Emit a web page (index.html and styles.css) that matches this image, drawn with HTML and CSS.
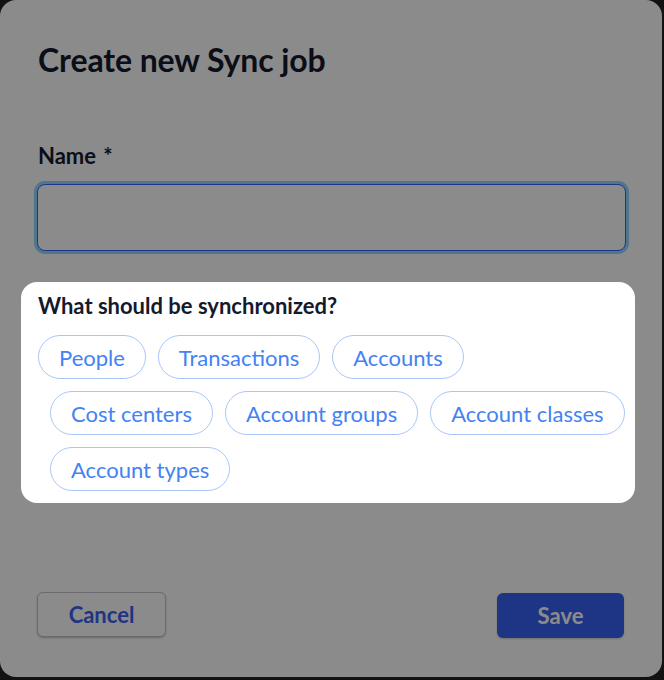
FILE: index.html
```html
<!DOCTYPE html>
<html lang="en">
<head>
<meta charset="utf-8">
<title>Create new Sync job</title>
<link rel="stylesheet" href="styles.css">
</head>
<body>
<div class="modal">
  <h1 class="title">Create new Sync job</h1>
  <label class="label" for="name">Name <span class="req">*</span></label>
  <input class="input" id="name" type="text">
  <section class="spotlight">
    <h2 class="question">What should be synchronized?</h2>
    <div class="chips">
      <span class="chip">People</span>
      <span class="chip">Transactions</span>
      <span class="chip">Accounts</span>
      <span class="chip">Cost centers</span>
      <span class="chip">Account groups</span>
      <span class="chip">Account classes</span>
      <span class="chip">Account types</span>
    </div>
  </section>
  <div class="actions">
    <button class="btn btn-cancel" type="button">Cancel</button>
    <button class="btn btn-save" type="button">Save</button>
  </div>
</div>
<div class="backdrop"></div>
</body>
</html>
```

FILE: styles.css
```css
* { box-sizing: border-box; }

html, body {
  margin: 0;
  padding: 0;
}

body {
  background: #222222;
  font-family: Lato, "Open Sans", Arial, sans-serif;
  color: #141a2e;
  width: 664px;
  height: 680px;
  overflow: hidden;
}

.modal {
  width: 662px;
  height: 677px;
  background: #ffffff;
  border-radius: 16px;
  padding: 40px 36px 0 37px;
  display: flex;
  flex-direction: column;
}

.title {
  margin: 0 0 0 1px;
  font-size: 32px;
  line-height: 40px;
  font-weight: 700;
  letter-spacing: -0.1px;
}

.label {
  margin: 63px 0 0 1px;
  font-size: 22px;
  line-height: 26px;
  font-weight: 700;
}

.req {
  font-weight: 700;
  margin-left: 2px;
}

.input {
  margin-top: 15px;
  width: 589px;
  height: 67px;
  flex-shrink: 0;
  border: 1px solid #3761f4;
  border-radius: 8px;
  background: #ffffff;
  box-shadow: 0 0 0 3px #93d8ff;
  outline: none;
}

.spotlight {
  position: relative;
  z-index: 2;
  margin: 31px 0 0 -16px;
  width: 614px;
  background: #ffffff;
  border-radius: 16px;
  padding: 11px 9px 12px 17px;
}

.question {
  margin: 0;
  font-size: 22px;
  line-height: 26px;
  font-weight: 700;
}

.chips {
  margin-top: 16px;
  display: flex;
  flex-wrap: wrap;
  row-gap: 12px;
}

.chip + .chip {
  margin-left: 12px;
}

.chip {
  display: inline-flex;
  align-items: center;
  height: 44px;
  padding: 0 20px;
  border: 1px solid #a9c6fb;
  border-radius: 22px;
  color: #4382f4;
  font-size: 22px;
  font-weight: 400;
  white-space: nowrap;
}

.actions {
  margin-top: auto;
  margin-bottom: 39px;
  display: flex;
  justify-content: space-between;
  align-items: center;
}

.btn {
  height: 45px;
  width: 129px;
  border-radius: 6px;
  font-family: Lato, "Open Sans", Arial, sans-serif;
  font-size: 22px;
  font-weight: 700;
  cursor: pointer;
}

.btn-cancel {
  background: #ffffff;
  color: #3a62f0;
  border: 1px solid #c4c4cc;
  box-shadow: 0 1px 2px rgba(0, 0, 0, 0.25);
}

.btn-save {
  width: 127px;
  background: #3761f4;
  color: #ffffff;
  border: none;
  margin-top: 2px;
  margin-right: 2px;
  box-shadow: 0 1px 2px rgba(0, 0, 0, 0.2);
}

.backdrop {
  position: fixed;
  inset: 0;
  z-index: 1;
  background: rgba(0, 0, 0, 0.455);
}
```
